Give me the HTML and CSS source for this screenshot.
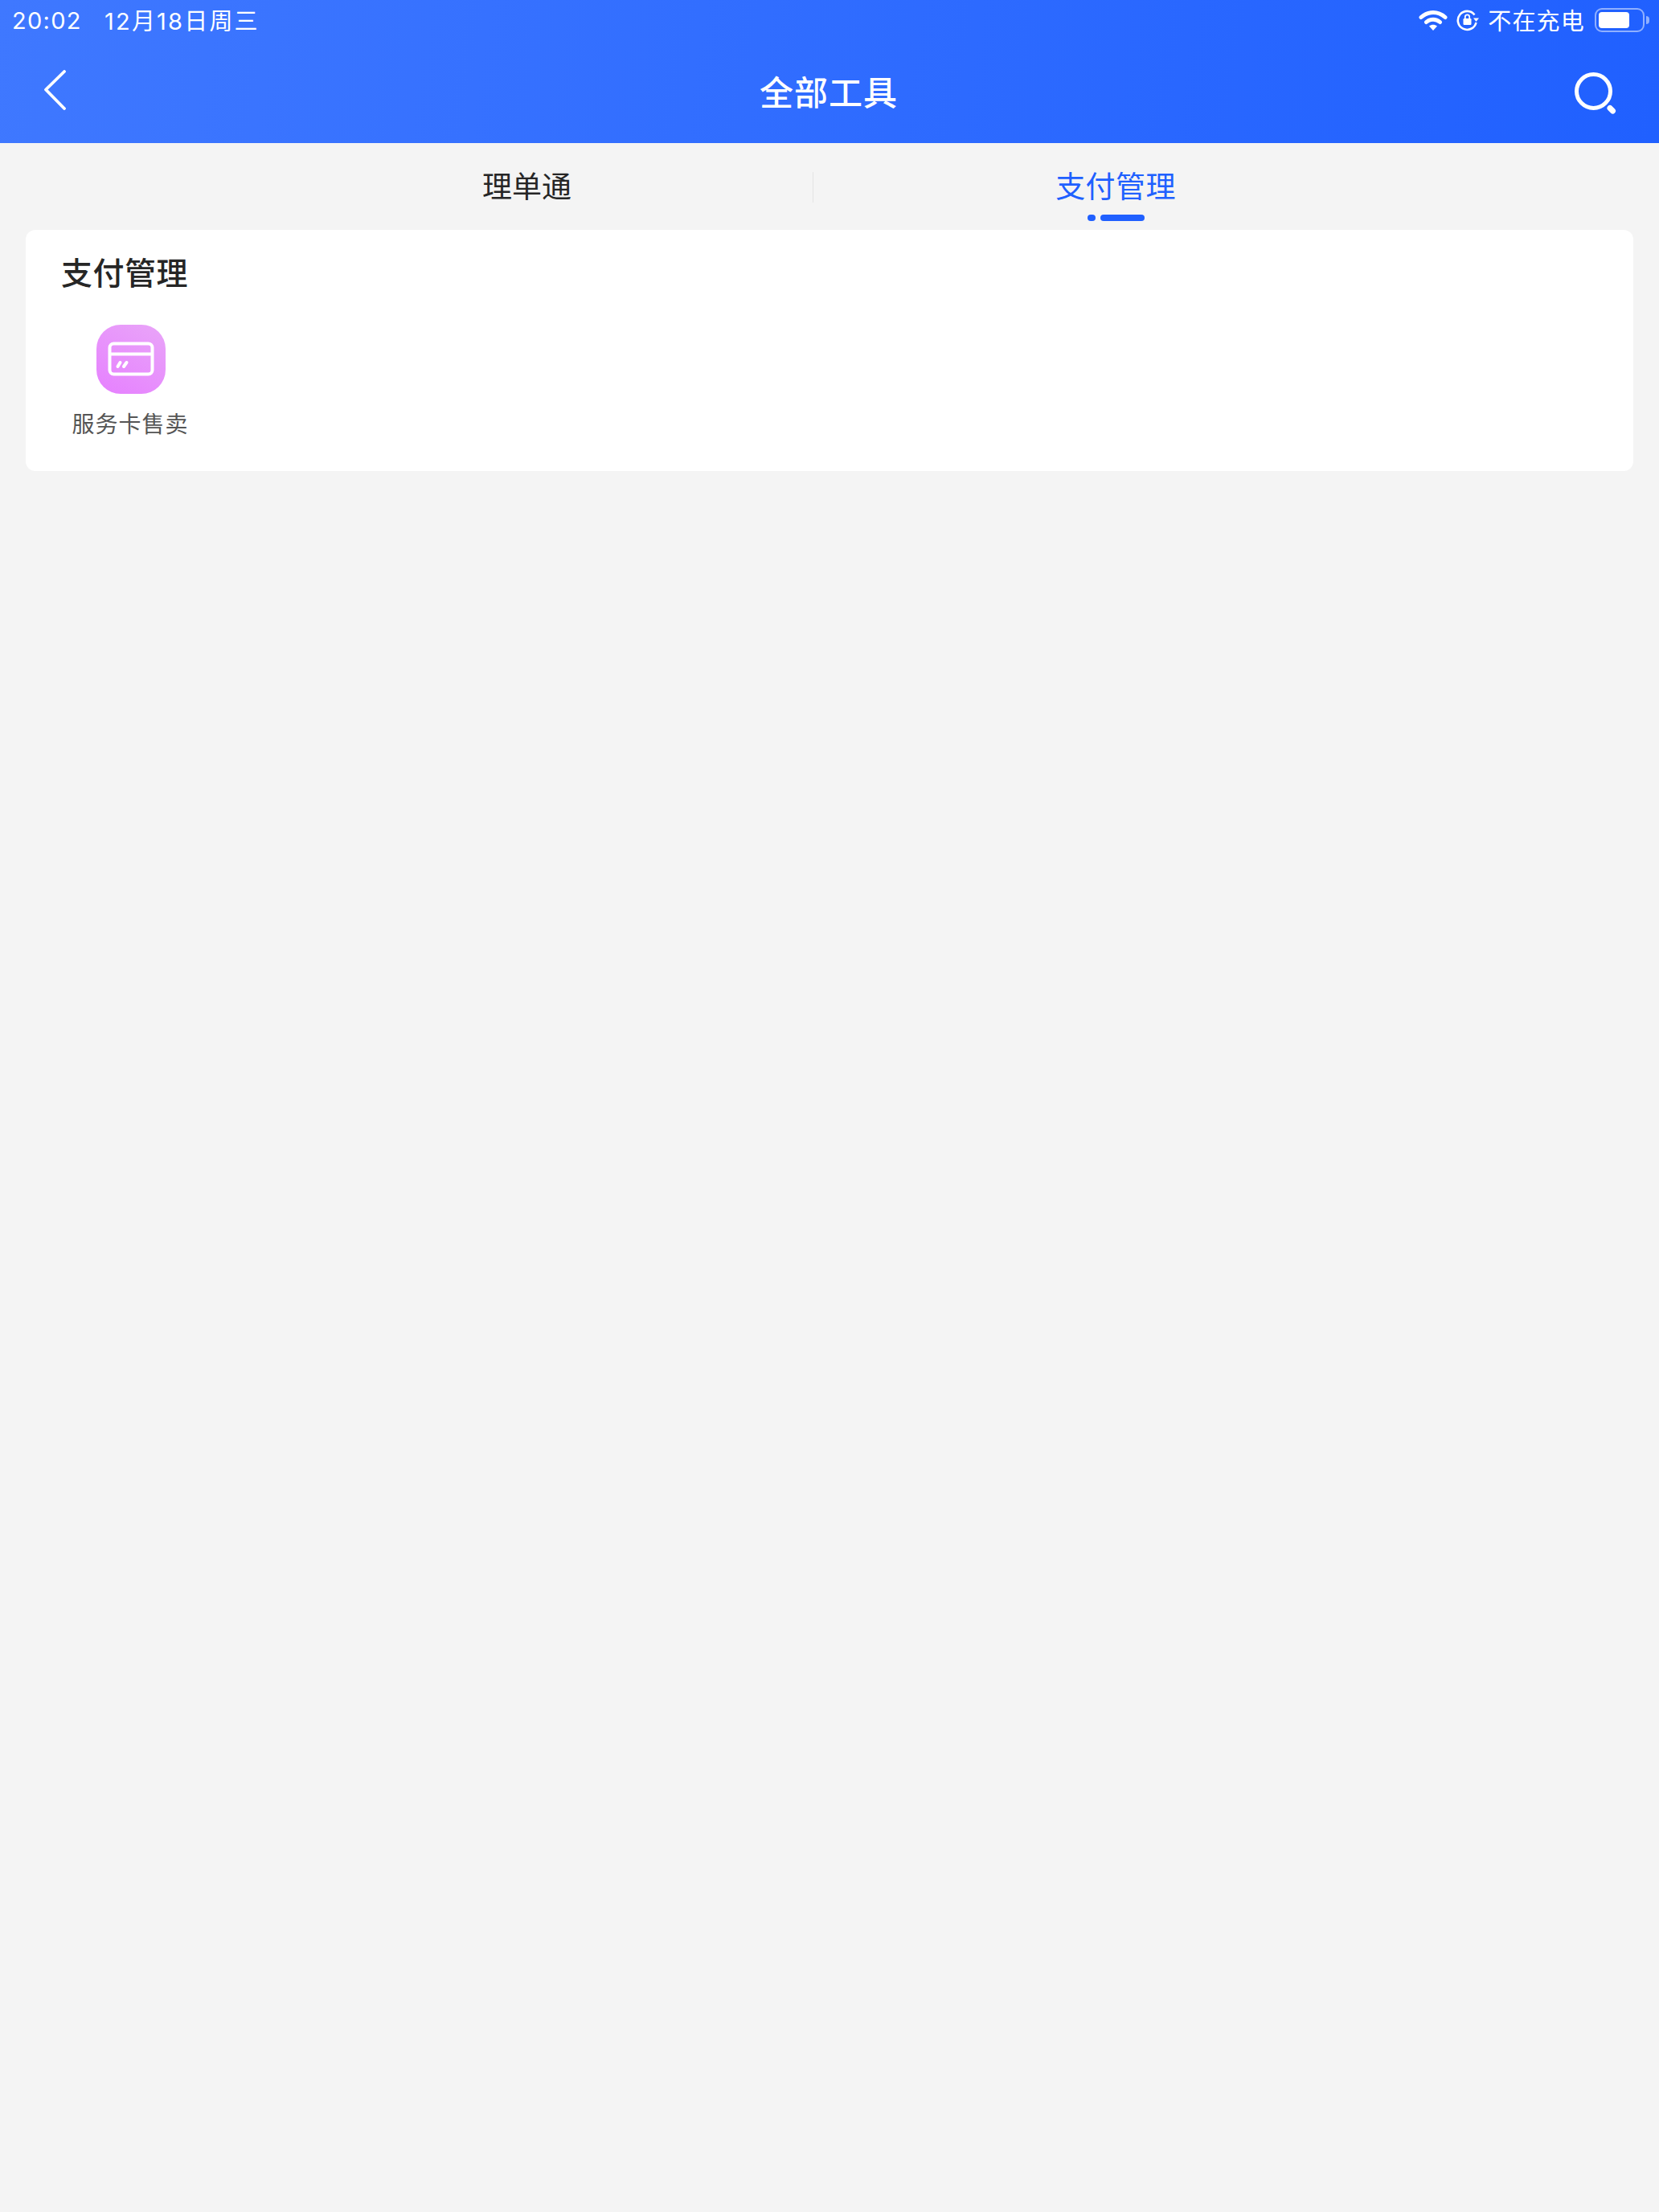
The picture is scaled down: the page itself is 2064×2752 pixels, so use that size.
FILE: index.html
```html
<!DOCTYPE html>
<html>
<head>
    <meta charset="UTF-8">
    <link rel="stylesheet" href="styles.css">
</head>
<body>
<div class="top">
    <div class="status">
        <span class="time">20:02</span>
        <span class="date">12月18日周三</span>
        <span class="grow"></span>
        <svg class="wifi" width="36" height="28" viewBox="0 0 36 28">
            <path d="M3 10.5C12 2.5 24 2.5 33 10.5" fill="none" stroke="#fff" stroke-width="5" stroke-linecap="round"/>
            <path d="M9.5 16.5C14.5 12 21.5 12 26.5 16.5" fill="none" stroke="#fff" stroke-width="5" stroke-linecap="round"/>
            <path d="M13 21.5C16 19 20 19 23 21.5L18 27Z" fill="#fff"/>
        </svg>
        <svg class="lock" width="28" height="28" viewBox="0 0 28 28">
            <path d="M22.5 7.5A11.5 11.5 0 1 0 24.5 17" fill="none" stroke="#fff" stroke-width="2.6"/>
            <path d="M21 11.5H28L24.5 16Z" fill="#fff"/>
            <rect x="8.5" y="12" width="10" height="8" rx="1.2" fill="#fff"/>
            <path d="M10.8 12V10A2.7 2.7 0 0 1 16.2 10V12" fill="none" stroke="#fff" stroke-width="1.8"/>
        </svg>
        <span class="charge">不在充电</span>
        <div class="battery"><div class="battery-fill"></div></div>
        <div class="battery-tip"></div>
    </div>
    <div class="nav">
        <svg class="back" width="28" height="50" viewBox="0 0 28 50">
            <path d="M26 2L3 24.5L26 48" fill="none" stroke="#fff" stroke-width="3.8" stroke-linecap="round" stroke-linejoin="round"/>
        </svg>
        <div class="title">全部工具</div>
        <svg class="search" width="54" height="54" viewBox="0 0 54 54">
            <circle cx="24.5" cy="23.5" r="21" fill="none" stroke="#fff" stroke-width="5"/>
            <path d="M45 44.5L48.5 48" fill="none" stroke="#fff" stroke-width="7" stroke-linecap="round"/>
        </svg>
    </div>
</div>
<div class="tabs">
    <div class="tab">理单通</div>
    <div class="tab tab-on">
        支付管理
        <div class="mark"><span class="mark-dot"></span><span class="mark-bar"></span></div>
    </div>
</div>
<div class="card">
    <div class="card-title">支付管理</div>
    <div class="tool">
        <div class="tool-icon">
            <svg width="58" height="44" viewBox="0 0 58 44">
                <rect x="2.5" y="2.5" width="53" height="38" rx="5" fill="none" stroke="#fff" stroke-width="4"/>
                <path d="M2.5 15.5H55.5" stroke="#fff" stroke-width="4"/>
                <path d="M12.5 31L15.5 26M20 31L23.5 26" fill="none" stroke="#fff" stroke-width="4" stroke-linecap="round"/>
            </svg>
        </div>
        <div class="tool-name">服务卡售卖</div>
    </div>
</div>
</body>
</html>
```

FILE: styles.css
```css
html,body{margin: 0;padding: 0;}
body{width: 2064px;height: 2752px;background: #f4f4f4;font-family: "Inter","Noto Sans CJK SC",sans-serif;overflow: hidden;}
.top{height: 178px;box-sizing: border-box;background: linear-gradient(100deg,#3f78ff 0%,#2060ff 100%);color: #fff;}

.status{display: flex;align-items: center;height: 50px;padding: 0 12px 0 15px;font-size: 29px;}
.time{width: 115px;letter-spacing: 1.3px;}
.date{letter-spacing: 2.2px;margin-top: -2px;}
.grow{flex: 1;}
.wifi{margin-right: 11px;}
.lock{margin-right: 11px;}
.charge{font-size: 29px;letter-spacing: 1.2px;margin-right: 12px;margin-top: -2px;}
.battery{width: 62px;height: 30px;box-sizing: border-box;border: 2px solid rgba(255,255,255,.5);border-radius: 9px;padding: 3px;}
.battery-fill{width: 38px;height: 20px;background: #fff;border-radius: 4px;}
.battery-tip{width: 4px;height: 10px;margin-left: 2px;background: rgba(255,255,255,.5);border-radius: 0 4px 4px 0;}

.nav{display: flex;align-items: center;height: 128px;padding: 0 52px 0 54px;}
.back{margin-top: -4px;}
.title{flex: 1;text-align: center;font-size: 42px;font-weight: 500;letter-spacing: 1px;margin-top: -4px;padding-left: 22px;}
.search{margin-top: 6px;}

.tabs{display: flex;height: 108px;padding-left: 300px;box-sizing: border-box;}
.tab{position: relative;width: 711px;height: 38px;margin-top: 36px;line-height: 38px;text-align: center;font-size: 37px;color: #262626;}
.tab-on{width: 752px;border-left: 1px solid #e4e4e4;color: #2060ff;letter-spacing: .4px;}
.mark{display: flex;justify-content: center;gap: 6px;margin-top: 15px;}
.mark-dot{width: 10px;height: 8px;border-radius: 5px;background: #2060ff;}
.mark-bar{width: 55px;height: 8px;border-radius: 4px;background: #2060ff;}

.card{width: 2000px;height: 300px;margin-left: 32px;box-sizing: border-box;padding: 30px 0 0 44px;background: #fff;border-radius: 12px;}
.card-title{font-size: 39px;line-height: 48px;font-weight: 500;color: #262626;letter-spacing: .5px;}
.tool{width: 172px;margin: 40px 0 0 0;display: flex;flex-direction: column;align-items: center;}
.tool-icon{width: 86px;height: 86px;margin-left: 2px;display: flex;align-items: center;justify-content: center;border-radius: 30px;background: linear-gradient(30deg,#e680ff 0%,#e9a5f8 100%);}
.tool-name{margin-top: 20px;font-size: 28px;line-height: 36px;letter-spacing: 1px;color: #555;white-space: nowrap;}
```
